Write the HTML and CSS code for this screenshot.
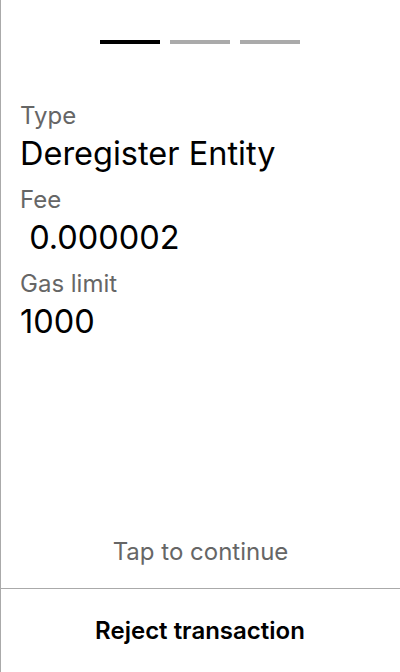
FILE: index.html
```html
<!DOCTYPE html>
<html>
<head>
<meta charset="utf-8">
<link rel="stylesheet" href="styles.css">
</head>
<body>
<div class="screen">
  <div class="progress">
    <span class="bar bar-active"></span>
    <span class="bar"></span>
    <span class="bar"></span>
  </div>
  <div class="details">
    <div class="field">
      <div class="label">Type</div>
      <div class="value">Deregister Entity</div>
    </div>
    <div class="field">
      <div class="label">Fee</div>
      <div class="value">&nbsp;0.000002</div>
    </div>
    <div class="field">
      <div class="label">Gas limit</div>
      <div class="value">1000</div>
    </div>
  </div>
  <div class="spacer"></div>
  <div class="tap">Tap to continue</div>
  <div class="reject">Reject transaction</div>
</div>
</body>
</html>
```

FILE: styles.css
```css
html, body {
  margin: 0;
  padding: 0;
  background: #fff;
}
body {
  font-family: Inter, "Noto Sans", sans-serif;
  color: #000;
}
.screen {
  width: 400px;
  height: 672px;
  box-sizing: border-box;
  border-left: 1px solid #aaa;
  display: flex;
  flex-direction: column;
}
.progress {
  display: flex;
  justify-content: center;
  gap: 10px;
  padding-top: 40px;
  margin-left: -1px;
}
.bar {
  display: block;
  width: 60px;
  height: 4px;
  background: #aaa;
}
.bar-active {
  background: #000;
}
.details {
  padding: 0 19px;
  margin-top: 57px;
}
.field + .field {
  margin-top: 11px;
}
.label {
  font-size: 24px;
  line-height: 29px;
  color: #666;
}
.value {
  font-size: 32.5px;
  line-height: 40px;
  margin-top: 4px;
}
.spacer {
  flex: 1;
}
.tap {
  font-size: 24px;
  line-height: 29px;
  color: #666;
  text-align: center;
  margin-bottom: 22px;
}
.reject {
  border-top: 1px solid #aaa;
  height: 83px;
  display: flex;
  align-items: center;
  justify-content: center;
  font-size: 24px;
  font-weight: 600;
  margin-left: -1px;
}
```
